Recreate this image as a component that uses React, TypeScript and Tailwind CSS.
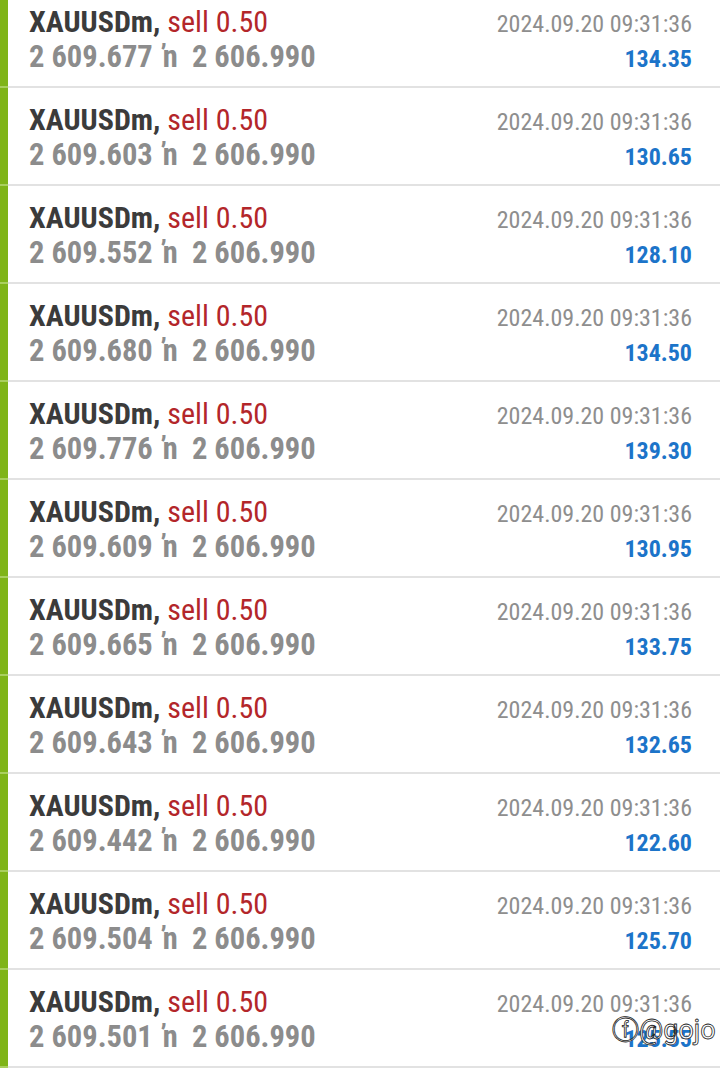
import React from "react";

const rows: [string, string][] = [
  ["2 609.677", "134.35"],
  ["2 609.603", "130.65"],
  ["2 609.552", "128.10"],
  ["2 609.680", "134.50"],
  ["2 609.776", "139.30"],
  ["2 609.609", "130.95"],
  ["2 609.665", "133.75"],
  ["2 609.643", "132.65"],
  ["2 609.442", "122.60"],
  ["2 609.504", "125.70"],
  ["2 609.501", "125.55"],
];

export default function App() {
  return (
    <div className="w-[720px] h-[1071px] overflow-hidden bg-white relative font-['Roboto_Condensed',Roboto,sans-serif]">
      <div className="-mt-[10px] flex flex-col">
        {rows.map(([open, profit], i) => (
          <div key={i} className="flex flex-col">
            <div className="flex h-[96px]">
              <div className="w-[8px] bg-[#7fb418]" />
              <div className="flex-1 pl-[21px] pr-[28px] pt-[14px] flex flex-col">
                <div className="flex justify-between items-baseline h-[35px] leading-[35px]">
                  <div className="text-[30px]">
                    <span className="font-bold text-[#3b3b3b]">XAUUSDm,</span>
                    <span className="text-[#b3262a]"> sell 0.50</span>
                  </div>
                  <div className="text-[24px] text-[#8e8e8e]">2024.09.20 09:31:36</div>
                </div>
                <div className="flex justify-between items-baseline h-[35px] leading-[35px]">
                  <div className="text-[30.5px] font-bold text-[#8c8c8c] whitespace-pre">
                    {open} <span className="ml-[3px]">ŉ</span>  2 606.990
                  </div>
                  <div className="text-[24px] font-bold text-[#1c74c9]">{profit}</div>
                </div>
              </div>
            </div>
            <div className="flex h-[2px]">
              <div className="w-[8px] bg-[#a9cf5e]" />
              <div className="flex-1 bg-[#e2e2e2]" />
            </div>
          </div>
        ))}
      </div>
      <div className="absolute left-[612px] top-[1010px] text-[27px] text-white [-webkit-text-stroke:0.8px_#222] font-['Roboto',sans-serif]">
        ⓕ@gojo
      </div>
    </div>
  );
}
